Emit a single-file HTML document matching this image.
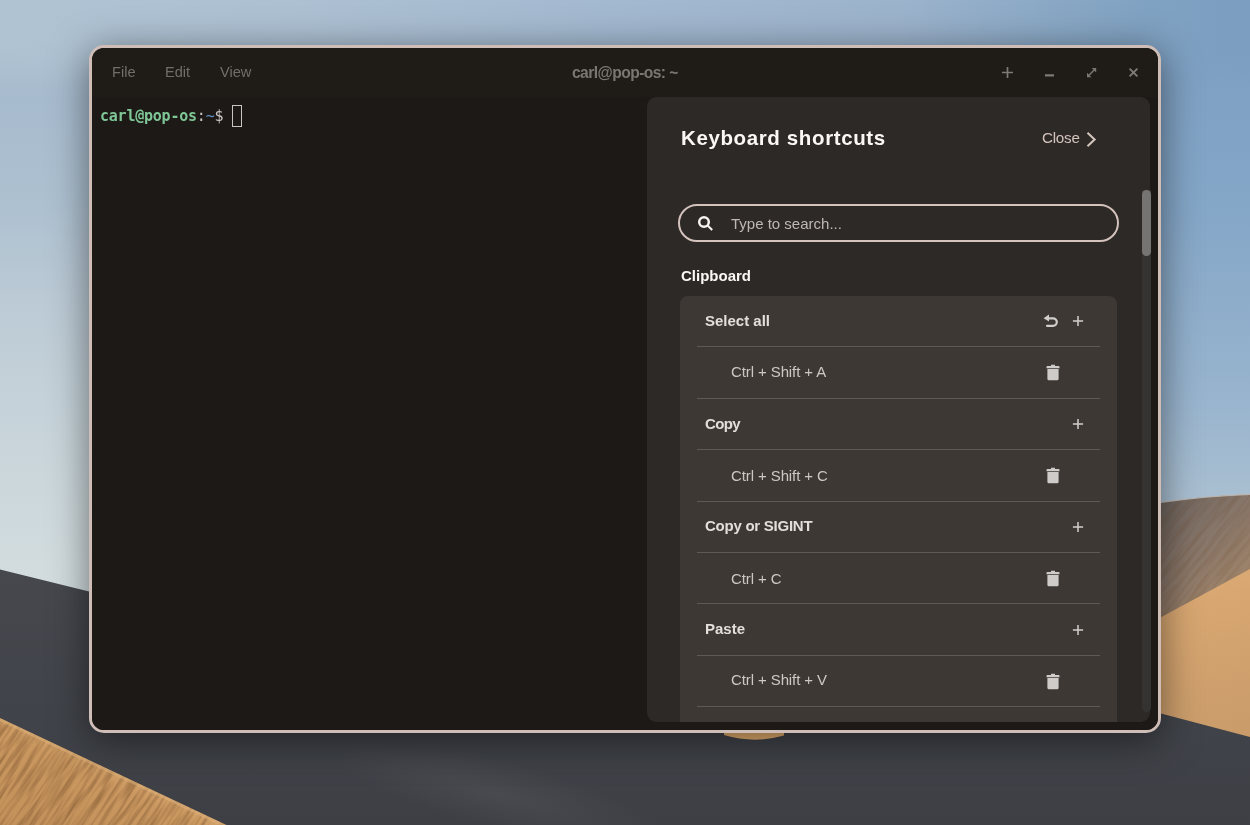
<!DOCTYPE html>
<html lang="en">
<head>
<meta charset="utf-8">
<title>carl@pop-os: ~</title>
<style>
*{box-sizing:border-box;margin:0;padding:0}
html,body{width:1250px;height:825px;overflow:hidden;background:#8aa6c2}
body{position:relative;font-family:"Liberation Sans",sans-serif;color:#e8e3df}
#wall{position:absolute;left:0;top:0;width:1250px;height:825px;display:block}
#win{will-change:transform;position:absolute;left:89px;top:45px;width:1072px;height:688px;border:3px solid #cfbeb7;border-radius:15px;background:#1d1917;box-shadow:0 7px 38px 0 rgba(0,0,0,.5);overflow:hidden}
#hdr{position:absolute;left:0;top:0;width:1066px;height:49px;background:#1f1c18}
.abs{position:absolute;white-space:nowrap;line-height:1}
.menu{color:#726d68;font-size:14.6px}
#title{color:#7a7672;font-weight:bold;font-size:15.6px;letter-spacing:-0.55px}
#term{position:absolute;left:0;top:49px;width:1066px;height:633px;background:#1d1917}
.mono{font-family:"DejaVu Sans Mono","Liberation Mono",monospace;font-weight:bold;font-size:15px;letter-spacing:-0.23px}
#panel{position:absolute;left:555px;top:49px;width:503px;height:625px;background:#2d2926;border-radius:9.5px;overflow:hidden}
#card{position:absolute;left:33px;top:199px;width:437px;height:460px;background:#3d3834;border-radius:8px 8px 0 0}
.div{position:absolute;left:17px;width:403px;height:1px;background:#5f5954}
.h{font-weight:bold;color:#e3deda;font-size:15px}
.k{color:#cdc8c4;font-size:15px;letter-spacing:-.1px}
svg.i{position:absolute;overflow:visible}
</style>
</head>
<body>
<svg id="wall" viewBox="0 0 1250 825" preserveAspectRatio="none">
<defs>
<linearGradient id="sky" x1="0" y1="0" x2="1" y2="0">
<stop offset="0" stop-color="#b0c3d3"/><stop offset="0.24" stop-color="#adc0d2"/><stop offset="0.48" stop-color="#a3b9d0"/><stop offset="0.72" stop-color="#9cb3cc"/><stop offset="0.84" stop-color="#8aa8c5"/><stop offset="0.92" stop-color="#80a2c2"/><stop offset="1" stop-color="#7b9ec1"/>
</linearGradient>
<linearGradient id="skyL" gradientUnits="userSpaceOnUse" x1="0" y1="0" x2="0" y2="600">
<stop offset="0.06" stop-color="#aec1d1" stop-opacity="0"/><stop offset="0.14" stop-color="#a8bcce"/><stop offset="0.17" stop-color="#a7bbce"/><stop offset="0.33" stop-color="#adc0d0"/><stop offset="0.5" stop-color="#bbcad5"/><stop offset="0.67" stop-color="#c5d2d9"/><stop offset="0.83" stop-color="#cdd8dc"/><stop offset="0.95" stop-color="#d2dcdf"/>
</linearGradient>
<linearGradient id="skyR" gradientUnits="userSpaceOnUse" x1="0" y1="0" x2="0" y2="510">
<stop offset="0.07" stop-color="#7c9fc2" stop-opacity="0"/><stop offset="0.17" stop-color="#7fa1c3"/><stop offset="0.4" stop-color="#84a6c7"/><stop offset="0.78" stop-color="#98b4ce"/><stop offset="1" stop-color="#abc0d1"/>
</linearGradient>
<linearGradient id="shd" gradientUnits="userSpaceOnUse" x1="1165" y1="500" x2="1250" y2="590">
<stop offset="0" stop-color="#6f6661"/><stop offset="0.5" stop-color="#8a786b"/><stop offset="1" stop-color="#a4876a"/>
</linearGradient>
<linearGradient id="lit" gradientUnits="userSpaceOnUse" x1="1161" y1="600" x2="1200" y2="740">
<stop offset="0" stop-color="#daa872"/><stop offset="1" stop-color="#c99c6a"/>
</linearGradient>
<linearGradient id="dark" gradientUnits="userSpaceOnUse" x1="0" y1="570" x2="0" y2="825">
<stop offset="0" stop-color="#46484e"/><stop offset="0.6" stop-color="#404349"/><stop offset="1" stop-color="#3d3f45"/>
</linearGradient>
<linearGradient id="sand" gradientUnits="userSpaceOnUse" x1="113" y1="771" x2="60" y2="880">
<stop offset="0" stop-color="#d3a168"/><stop offset="0.12" stop-color="#c9975f"/><stop offset="1" stop-color="#c08e58"/>
</linearGradient>
<radialGradient id="band"><stop offset="0" stop-color="#56565a" stop-opacity="0.45"/><stop offset="1" stop-color="#56565a" stop-opacity="0"/></radialGradient>
<clipPath id="shdclip"><path d="M1150 504 L1161 502.4 Q1205 496 1250 494.3 L1250 640 L1150 660Z"/></clipPath>
<clipPath id="sandclip"><path d="M0 718 L226.5 825 L0 825Z"/></clipPath>
<filter id="tex" x="0" y="0" width="100%" height="100%" color-interpolation-filters="sRGB">
<feTurbulence type="fractalNoise" baseFrequency="0.02 0.28" numOctaves="3" seed="7"/>
<feColorMatrix type="matrix" values="0 0 0 0 0.42  0 0 0 0 0.27  0 0 0 0 0.14  1.1 0 0 0 -0.42"/>
</filter>
</defs>
<rect width="1250" height="825" fill="url(#sky)"/>
<rect x="0" y="0" width="93" height="620" fill="url(#skyL)"/>
<rect x="1157" y="0" width="93" height="520" fill="url(#skyR)"/>
<path d="M1150 504 L1161 502.4 Q1205 496 1250 494.3 L1250 640 L1150 660Z" fill="url(#shd)"/>
<g clip-path="url(#shdclip)" opacity="0.45"><g transform="rotate(-52 1200 560)"><rect x="1050" y="420" width="300" height="300" filter="url(#tex)"/></g></g>
<path d="M1150 504 L1161 502.4 Q1205 496 1250 494.3" stroke="#c4bcb4" stroke-width="1.2" fill="none" opacity="0.8"/>
<path d="M1150 623 L1161 617.3 L1250 569 L1250 760 L1150 730Z" fill="url(#lit)"/>
<path d="M0 569.5 L89 591.5 L140 604 L140 700 L1161 700 L1161 713.5 L1250 737 L1250 825 L0 825Z" fill="url(#dark)"/>
<path d="M724 728 L784 728 L784 735.5 Q754 744 724 735Z" fill="#e6b070"/>
<ellipse cx="500" cy="795" rx="170" ry="34" transform="rotate(14 500 795)" fill="url(#band)"/>
<path d="M0 718 L226.5 825 L0 825Z" fill="url(#sand)"/>
<g clip-path="url(#sandclip)">
<g transform="rotate(-56 100 780)"><rect x="-150" y="560" width="520" height="440" filter="url(#tex)"/></g>
<path d="M0 719.5 L224 825.5" stroke="#ddb07a" stroke-width="3" opacity="0.55" fill="none"/>
</g>
</svg>

<div id="win">
 <div id="hdr">
  <div class="abs menu" style="left:20px;top:17px">File</div>
  <div class="abs menu" style="left:73px;top:17px">Edit</div>
  <div class="abs menu" style="left:128px;top:17px">View</div>
  <div class="abs" id="title" style="left:480px;top:17px">carl@pop-os: ~</div>
  <svg class="i" style="left:910px;top:19.2px" width="11" height="11" viewBox="0 0 11 11"><path d="M5.5 0V11M0 5.5H11" stroke="#7d7975" stroke-width="1.7" fill="none"/></svg>
  <svg class="i" style="left:953px;top:26.1px" width="9" height="3" viewBox="0 0 9 3"><path d="M0 1.4H9" stroke="#7d7975" stroke-width="2.2" fill="none"/></svg>
  <svg class="i" style="left:995px;top:19.9px" width="9.2" height="9.2" viewBox="0 0 9.2 9.2"><path d="M2 7.2L7.2 2" stroke="#7a7672" stroke-width="1.5" fill="none"/><path d="M4.7 0H9.2V4.5ZM0 4.7V9.2H4.5Z" fill="#7a7672"/></svg>
  <svg class="i" style="left:1037px;top:20px" width="9" height="9" viewBox="0 0 9 9"><path d="M0.6 0.6L8.4 8.4M8.4 0.6L0.6 8.4" stroke="#7d7975" stroke-width="1.9" fill="none"/></svg>
 </div>
 <div id="term">
  <div class="abs mono" style="left:8px;top:12px"><span style="color:#7fc696">carl@pop-os</span><span style="color:#cbc7c3;font-weight:normal">:</span><span style="color:#5c93c6;font-weight:normal">~</span><span style="color:#cbc7c3;font-weight:normal">$</span></div>
  <div class="abs" style="left:140px;top:8px;width:10px;height:22px;border:1px solid #c9c5c1"></div>
 </div>
 <div id="panel">
  <div class="abs" style="left:34px;top:31px;font-weight:bold;font-size:20.5px;letter-spacing:0.62px;color:#fbf7f4">Keyboard shortcuts</div>
  <div class="abs" style="left:395px;top:33.3px;font-size:15.2px;letter-spacing:-0.25px;color:#d3c3bd">Close</div>
  <svg class="i" style="left:439px;top:34px" width="12" height="17" viewBox="0 0 12 17"><path d="M1.5 1.8L8.6 8.5L1.5 15.2" stroke="#d3c3bd" stroke-width="2.1" fill="none"/></svg>
  <div class="abs" style="left:31px;top:107px;width:441px;height:38px;border:2px solid #d4c2bc;border-radius:19px"></div>
  <svg class="i" style="left:50px;top:118px" width="17" height="17" viewBox="0 0 17 17"><circle cx="7" cy="7" r="4.8" stroke="#f6f2ef" stroke-width="2.5" fill="none"/><path d="M10.4 10.3L15.2 14.9" stroke="#f6f2ef" stroke-width="2.1" fill="none"/></svg>
  <div class="abs" style="left:84px;top:118.5px;font-size:15px;color:#bdb8b4">Type to search...</div>
  <div class="abs" style="left:34px;top:171.3px;font-weight:bold;font-size:15px;color:#fbf7f4">Clipboard</div>
  <div id="card">
   <div class="abs h" style="left:25px;top:17.4px">Select all</div>
   <div class="div" style="top:50px"></div>
   <div class="abs k" style="left:51px;top:68.3px">Ctrl + Shift + A</div>
   <div class="div" style="top:102px"></div>
   <div class="abs h" style="left:25px;top:119.8px;letter-spacing:-.6px">Copy</div>
   <div class="div" style="top:153px"></div>
   <div class="abs k" style="left:51px;top:171.5px">Ctrl + Shift + C</div>
   <div class="div" style="top:205px"></div>
   <div class="abs h" style="left:25px;top:222.2px;letter-spacing:-.25px">Copy or SIGINT</div>
   <div class="div" style="top:256px"></div>
   <div class="abs k" style="left:51px;top:275px">Ctrl + C</div>
   <div class="div" style="top:307px"></div>
   <div class="abs h" style="left:25px;top:325.2px">Paste</div>
   <div class="div" style="top:359px"></div>
   <div class="abs k" style="left:51px;top:376.3px">Ctrl + Shift + V</div>
   <div class="div" style="top:410px"></div>
   <svg class="i" style="left:363px;top:17px" width="16" height="16" viewBox="0 0 16 16"><path d="M5 5.4H10.1A3.7 3.7 0 0 1 10.1 12.8H4" stroke="#d2cecb" stroke-width="2.2" fill="none" stroke-linecap="round"/><path d="M0.6 5.2L6 1.6V8.4Z" fill="#d2cecb"/></svg>
   <svg class="i" style="left:392px;top:19px" width="12" height="12" viewBox="0 0 12 12"><path d="M6 0.9V11.1M0.9 6H11.1" stroke="#d2cecb" stroke-width="1.5" fill="none"/></svg>
   <svg class="i" style="left:364.5px;top:68.0px" width="16" height="17" viewBox="0 0 16 17"><path d="M6 0.8H10V1.9H13.6A0.9 0.9 0 0 1 14.5 2.8V4.2H1.5V2.8A0.9 0.9 0 0 1 2.4 1.9H6Z" fill="#cfcbc8"/><path d="M2.4 4.9H13.6V15.1A1.1 1.1 0 0 1 12.5 16.2H3.5A1.1 1.1 0 0 1 2.4 15.1Z" fill="#cfcbc8"/></svg>
   <svg class="i" style="left:392px;top:122px" width="12" height="12" viewBox="0 0 12 12"><path d="M6 0.9V11.1M0.9 6H11.1" stroke="#d2cecb" stroke-width="1.5" fill="none"/></svg>
   <svg class="i" style="left:364.5px;top:171.0px" width="16" height="17" viewBox="0 0 16 17"><path d="M6 0.8H10V1.9H13.6A0.9 0.9 0 0 1 14.5 2.8V4.2H1.5V2.8A0.9 0.9 0 0 1 2.4 1.9H6Z" fill="#cfcbc8"/><path d="M2.4 4.9H13.6V15.1A1.1 1.1 0 0 1 12.5 16.2H3.5A1.1 1.1 0 0 1 2.4 15.1Z" fill="#cfcbc8"/></svg>
   <svg class="i" style="left:392px;top:224.5px" width="12" height="12" viewBox="0 0 12 12"><path d="M6 0.9V11.1M0.9 6H11.1" stroke="#d2cecb" stroke-width="1.5" fill="none"/></svg>
   <svg class="i" style="left:364.5px;top:274.0px" width="16" height="17" viewBox="0 0 16 17"><path d="M6 0.8H10V1.9H13.6A0.9 0.9 0 0 1 14.5 2.8V4.2H1.5V2.8A0.9 0.9 0 0 1 2.4 1.9H6Z" fill="#cfcbc8"/><path d="M2.4 4.9H13.6V15.1A1.1 1.1 0 0 1 12.5 16.2H3.5A1.1 1.1 0 0 1 2.4 15.1Z" fill="#cfcbc8"/></svg>
   <svg class="i" style="left:392px;top:327.5px" width="12" height="12" viewBox="0 0 12 12"><path d="M6 0.9V11.1M0.9 6H11.1" stroke="#d2cecb" stroke-width="1.5" fill="none"/></svg>
   <svg class="i" style="left:364.5px;top:376.5px" width="16" height="17" viewBox="0 0 16 17"><path d="M6 0.8H10V1.9H13.6A0.9 0.9 0 0 1 14.5 2.8V4.2H1.5V2.8A0.9 0.9 0 0 1 2.4 1.9H6Z" fill="#cfcbc8"/><path d="M2.4 4.9H13.6V15.1A1.1 1.1 0 0 1 12.5 16.2H3.5A1.1 1.1 0 0 1 2.4 15.1Z" fill="#cfcbc8"/></svg>
  </div>
 </div>
 <div class="abs" style="left:1050px;top:142px;width:8.8px;height:522px;background:#343332;border-radius:0 0 4.4px 4.4px"></div>
 <div class="abs" style="left:1050px;top:142px;width:8.8px;height:66px;background:#757473;border-radius:4.4px"></div>
</div>
</body>
</html>
